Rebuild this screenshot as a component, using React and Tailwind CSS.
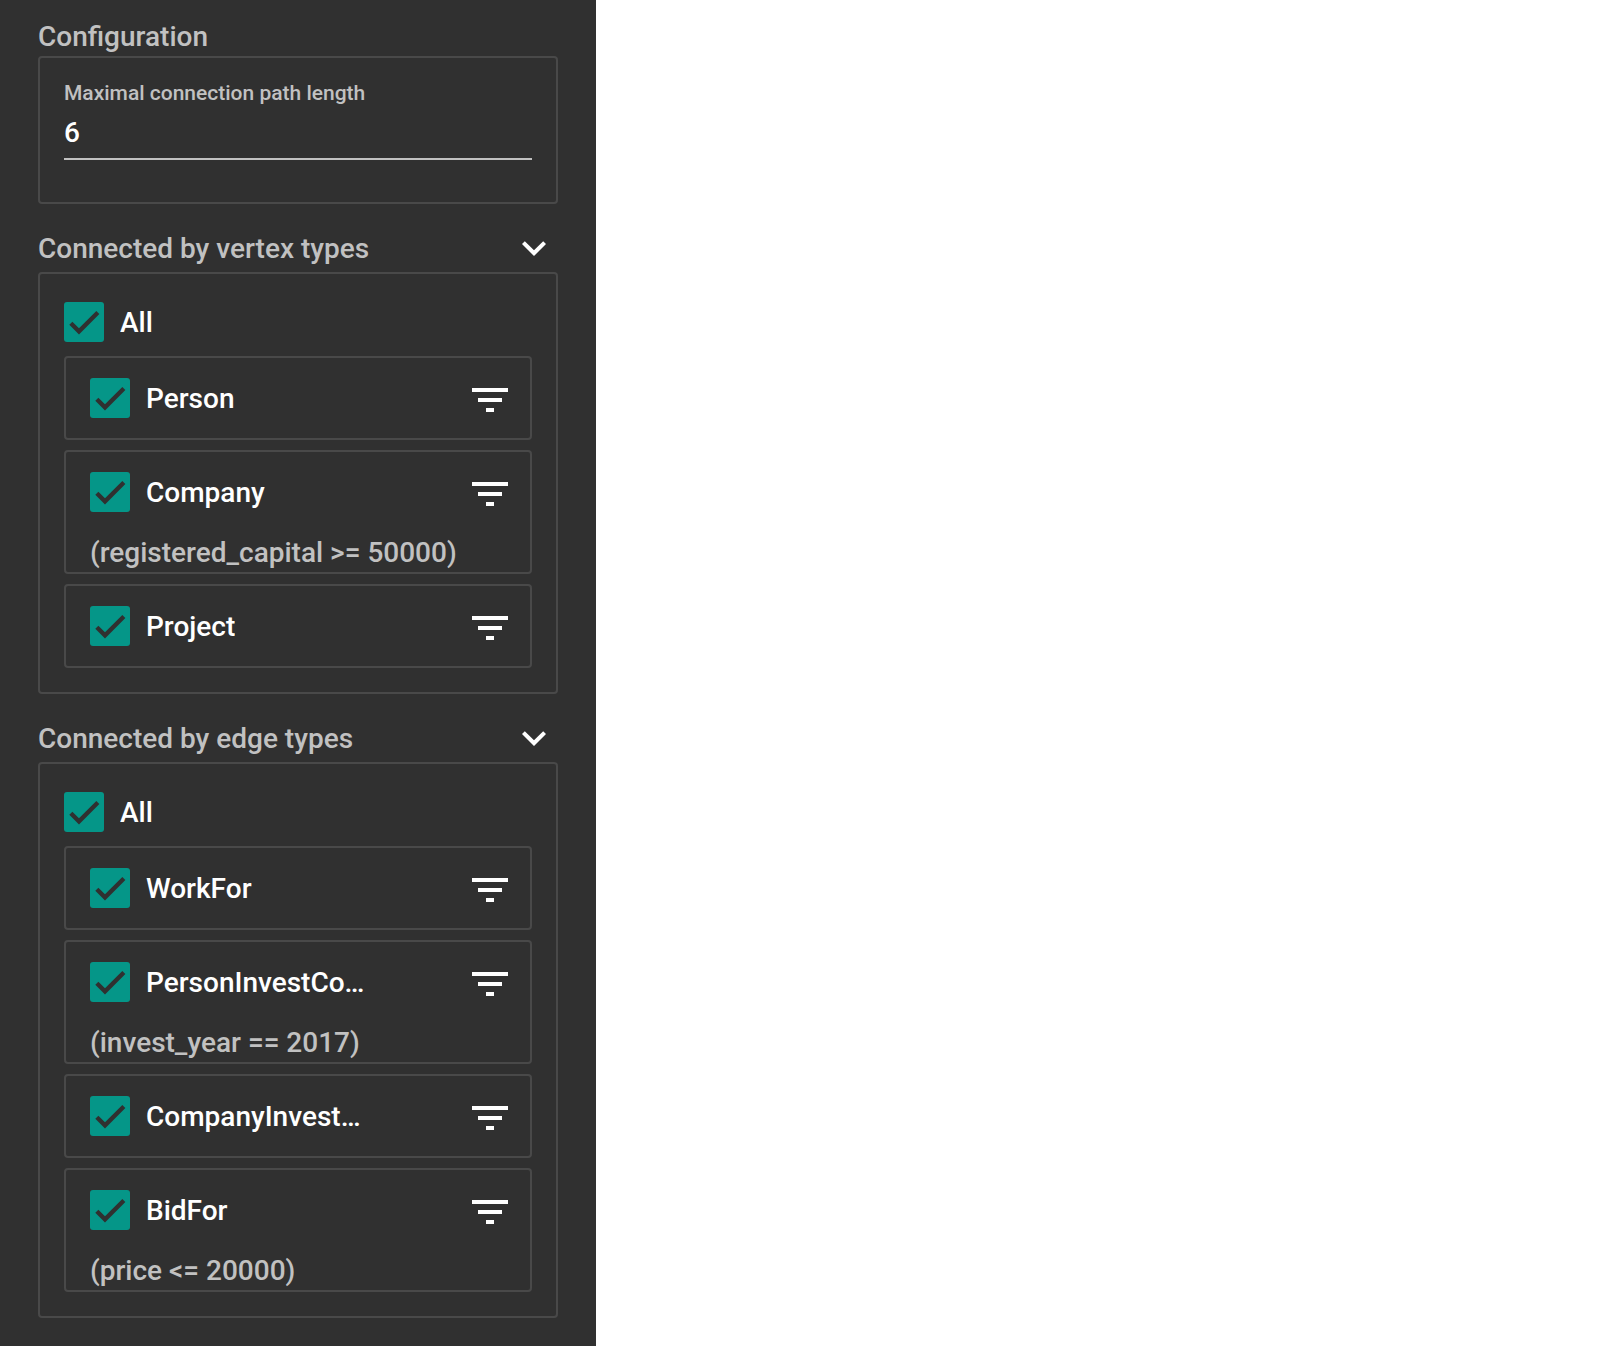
import React from "react";

const vertexTypes = [
  { name: "Person" },
  { name: "Company", filter: "(registered_capital >= 50000)" },
  { name: "Project" },
];

const edgeTypes = [
  { name: "WorkFor" },
  { name: "PersonInvestCo…", filter: "(invest_year == 2017)" },
  { name: "CompanyInvest…" },
  { name: "BidFor", filter: "(price <= 20000)" },
];

function Checkbox({ label }) {
  return (
    <label className="flex min-w-0 items-center gap-4">
      <span className="grid size-10 shrink-0">
        <input
          type="checkbox"
          defaultChecked
          className="peer col-start-1 row-start-1 size-10 appearance-none rounded-[3px] border-4 border-[#c1c1c1] checked:border-0 checked:bg-[#059688]"
        />
        <svg
          viewBox="0 0 24 24"
          className="pointer-events-none invisible col-start-1 row-start-1 size-10 peer-checked:visible"
          fill="none"
          stroke="#303030"
          strokeWidth="2.6"
          aria-hidden="true"
        >
          <path d="M4.1,12.7 9,17.6 20.3,6.3" />
        </svg>
      </span>
      <span className="truncate text-white">{label}</span>
    </label>
  );
}

function TypeItem({ name, filter }) {
  return (
    <li className="rounded-sm border-2 border-[#494949]">
      <div className="flex h-20 items-center justify-between pr-4 pl-6">
        <Checkbox label={name} />
        <button type="button" aria-label={"Filter " + name} className="shrink-0 pt-1">
          <svg viewBox="0 0 24 24" className="size-12" fill="white" aria-hidden="true">
            <path d="M10 18h4v-2h-4v2zM3 6v2h18V6H3zm3 7h12v-2H6v2z" />
          </svg>
        </button>
      </div>
      {filter && <div className="flex h-10 items-end pl-6">{filter}</div>}
    </li>
  );
}

function TypeSection({ title, types }) {
  return (
    <section className="mt-5">
      <div className="flex h-12 items-center justify-between">
        <h2>{title}</h2>
        <button type="button" aria-label={"Toggle " + title}>
          <svg viewBox="0 0 24 24" className="size-12" fill="white" aria-hidden="true">
            <path d="M16.59 8.59L12 13.17 7.41 8.59 6 10l6 6 6-6z" />
          </svg>
        </button>
      </div>
      <div className="rounded-sm border-2 border-[#494949] p-6">
        <div className="flex h-12 items-center">
          <Checkbox label="All" />
        </div>
        <ul className="mt-[10px] flex flex-col gap-[10px]">
          {types.map((t) => (
            <TypeItem key={t.name} {...t} />
          ))}
        </ul>
      </div>
    </section>
  );
}

export default function App() {
  return (
    <div className="flex min-h-screen bg-white">
      <aside className="w-[596px] max-w-full bg-[#303030] px-[38px] pt-[17px] pb-7 font-['Roboto',sans-serif] text-[28px] leading-[39px] font-medium text-[#c1c1c1]">
        <section>
          <h2>Configuration</h2>
          <div className="rounded-sm border-2 border-[#494949] px-6 pt-6 pb-[42px]">
            <label htmlFor="path-length" className="block text-[21px] leading-[22px]">
              Maximal connection path length
            </label>
            <input
              id="path-length"
              type="text"
              defaultValue="6"
              className="mt-2 block h-12 w-full border-b-2 border-[#c1c1c1] bg-transparent pb-[6px] text-white outline-none"
            />
          </div>
        </section>
        <TypeSection title="Connected by vertex types" types={vertexTypes} />
        <TypeSection title="Connected by edge types" types={edgeTypes} />
      </aside>
    </div>
  );
}
